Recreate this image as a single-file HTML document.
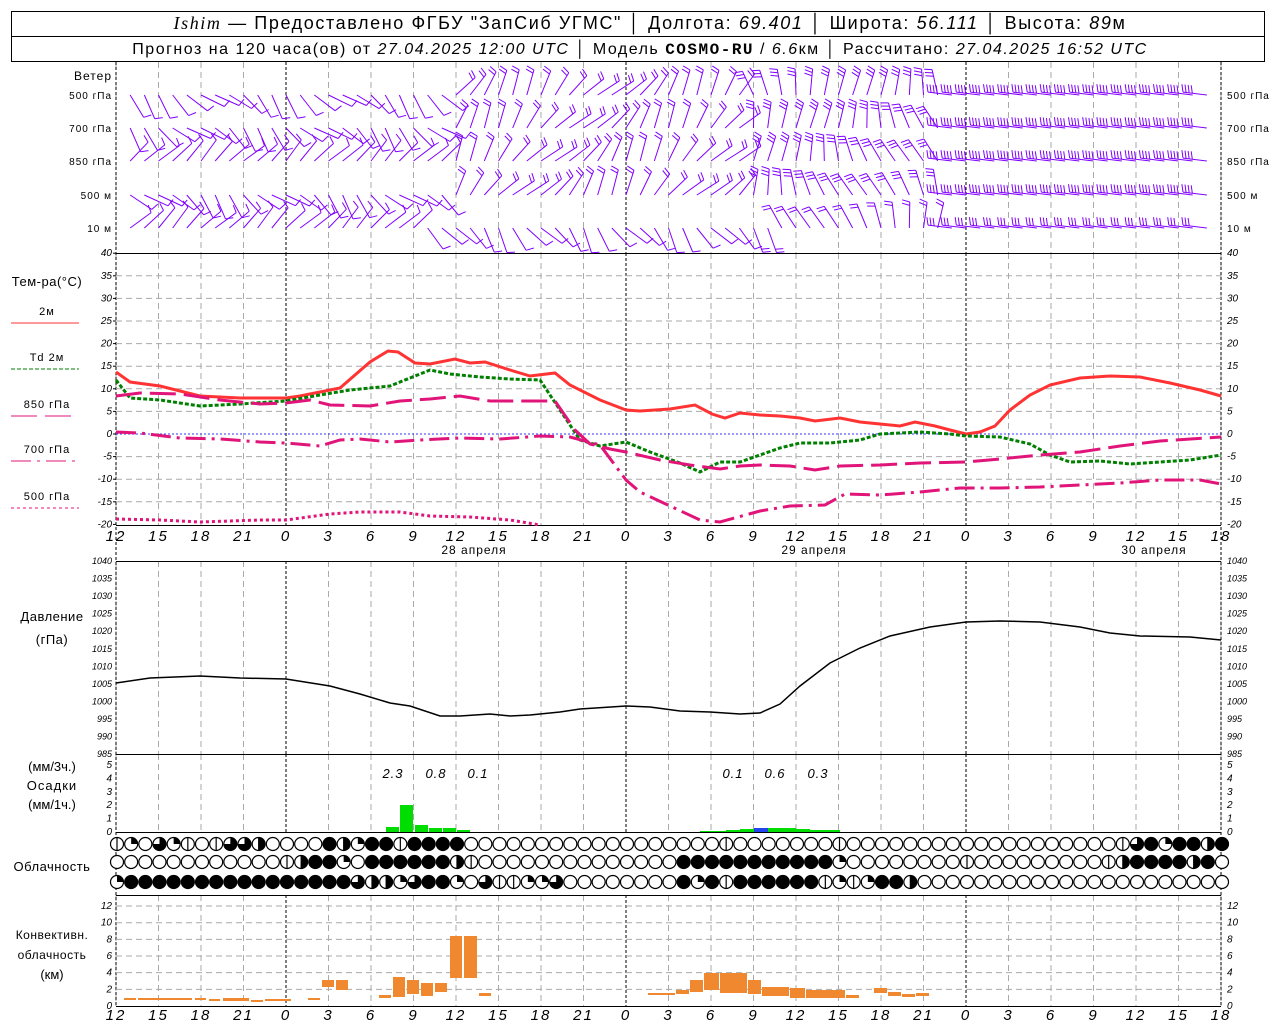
<!DOCTYPE html>
<html><head><meta charset="utf-8">
<style>
html,body{margin:0;padding:0;background:#fff;width:1280px;height:1024px;overflow:hidden}
svg{display:block}
text{font-family:"Liberation Sans","DejaVu Sans",sans-serif}
</style></head><body>
<svg id="s" width="1280" height="1024" xmlns="http://www.w3.org/2000/svg"></svg>
<script>
const S=document.getElementById('s');let h='';
const X0=116,X1=1221,PH=(X1-X0)/78;
const xh=i=>X0+i*PH;
function L(x1,y1,x2,y2,c,w,d){h+=`<line x1="${x1}" y1="${y1}" x2="${x2}" y2="${y2}" stroke="${c}" stroke-width="${w||1}"${d?` stroke-dasharray="${d}"`:''}/>`;}
function T(x,y,t,o){o=o||{};h+=`<text x="${x}" y="${y}" font-size="${o.s||12}" ${o.a?`text-anchor="${o.a}"`:''} ${o.i?'font-style="italic"':''} ${o.b?'font-weight="bold"':''} fill="${o.c||'#000'}" ${o.ls?`letter-spacing="${o.ls}"`:''}>${t}</text>`;}
function P(pts,c,w,d){h+=`<polyline fill="none" points="${pts.map(p=>p.join(',')).join(' ')}" stroke="${c}" stroke-width="${w}"${d?` stroke-dasharray="${d}"`:''}/>`;}
// header
h+=`<rect x="11.5" y="11.5" width="1253" height="50" fill="none" stroke="#000"/>`;L(11,36.5,1264,36.5,'#000');
h+=`<text x="650" y="29" font-size="18" letter-spacing="1.6" text-anchor="middle"><tspan font-style="italic" font-family="Liberation Serif">Ishim</tspan> — Предоставлено ФГБУ "ЗапСиб УГМС" │ Долгота: <tspan font-style="italic">69.401</tspan> │ Широта: <tspan font-style="italic">56.111</tspan> │ Высота: <tspan font-style="italic">89</tspan>м</text>`;
h+=`<text x="640" y="54" font-size="16" letter-spacing="1.5" text-anchor="middle">Прогноз на 120 часа(ов) от <tspan font-style="italic">27.04.2025 12:00 UTC</tspan> │ Модель <tspan font-family="Liberation Mono" font-weight="bold">COSMO-RU</tspan> / <tspan font-style="italic">6.6</tspan>км │ Рассчитано: <tspan font-style="italic">27.04.2025 16:52 UTC</tspan></text>`;
// vertical grids
const secs=[[62,253],[253,525],[561,754],[754,832],[895,1006]];
for(let i=0;i<=78;i+=3){const x=xh(i);const day=(i+12)%24==0;
 secs.forEach(([a,b])=>L(x,a,x,b,day?'#000':'#aaa',1,day?'3,2':'6,4'));}
L(X0,62,X0,1006,'#000',1,'3,2');L(X1,62,X1,1006,'#000',1,'3,2');
L(X0,253.5,X1,253.5,'#000');L(X0,754.5,X1,754.5,'#000');L(X0,561.5,X1,561.5,'#000');L(X0,895.5,X1,895.5,'#000');L(X0,832.5,X1,832.5,'#000');
for(let v=-20;v<=40;v+=5){const y=434-v*4.52;if(v>-20&&v<40)L(X0,y,X1,y,v==0?'#33f':'#aaa',1,v==0?'2,2':'6,4');
 T(112,y+3,v,{s:10,a:'end',i:1});T(1227,y+3,v,{s:10,i:1});L(X0-3,y,X0,y,'#000');}
L(X0,525.5,X1,525.5,'#000');
for(let p=985;p<=1040;p+=5){const y=561+(1040-p)*3.51;T(112,y+3,p,{s:9,a:'end',i:1});T(1227,y+3,p,{s:9,i:1});}
for(let v=0;v<=5;v++){const y=832-v*13.4;T(112,y+3,v,{s:10,a:'end',i:1});T(1227,y+3,v,{s:10,i:1});}
for(let v=0;v<=12;v+=2){const y=1006-v*8.33;if(v>0)L(X0,y,X1,y,'#aaa',1,'6,4');T(112,y+3,v,{s:10,a:'end',i:1});T(1227,y+3,v,{s:10,i:1});}
L(X0,1006.5,X1,1006.5,'#000');
for(let i=0;i<=78;i+=3){const hr=(i+12)%24;T(xh(i),541,hr,{s:15,a:'middle',i:1,ls:2});T(xh(i),1020,hr,{s:15,a:'middle',i:1,ls:2});}
T(474,554,'28 апреля',{s:12,a:'middle',ls:1});T(814,554,'29 апреля',{s:12,a:'middle',ls:1});T(1154,554,'30 апреля',{s:12,a:'middle',ls:1});
T(112,80,'Ветер',{s:12,a:'end',ls:1});
[['500 гПа',95],['700 гПа',128],['850 гПа',161],['500 м',195],['10 м',228]].forEach(([t,y])=>{T(112,y+4,t,{s:10,a:'end',ls:1});T(1227,y+4,t,{s:10,ls:1});});
T(47,286,'Тем-ра(°C)',{s:13,a:'middle',ls:0.5});
const leg=[['2м',315,'#f33','0'],['Td  2м',361,'green','4,2'],['850 гПа',408,'#e1147a','26,8'],['700 гПа',453,'#e1147a','20,6,3,6'],['500 гПа',500,'#e1147a','3,3']];
leg.forEach(([t,y,c,d])=>{T(47,y,t,{s:11,a:'middle',ls:1});L(11,y+8,79,y+8,c,1,d=='0'?null:d);});
T(52,621,'Давление',{s:13,a:'middle',ls:0.5});T(52,644,'(гПа)',{s:13,a:'middle',ls:0.5});
T(52,771,'(мм/3ч.)',{s:13,a:'middle'});T(52,790,'Осадки',{s:13,a:'middle',ls:1});T(52,809,'(мм/1ч.)',{s:13,a:'middle'});
T(52,871,'Облачность',{s:13,a:'middle',ls:0.5});
T(52,939,'Конвективн.',{s:12,a:'middle',ls:0.5});T(52,959,'облачность',{s:12,a:'middle',ls:0.5});T(52,979,'(км)',{s:13,a:'middle'});
// wind barbs
const rows=[95,128,161,195,228];
for(let r=0;r<5;r++)for(let i=1;i<78;i++){const x=xh(i),y=rows[r];
 let f=i/78, ang;
 if(f<0.3) ang=(r==2||r==4)?-Math.PI*(0.25+0.05*Math.sin(i+r)):Math.PI*(0.25+0.12*Math.sin(i*0.7+r));
 else if(f<0.57) ang=-Math.PI*(0.3+0.12*Math.sin(i*0.5+r));
 else if(f<0.75) ang=-Math.PI*(0.55+0.15*Math.cos(i*0.3+r));
 else ang=-Math.PI+0.12;
 if(r==4&&f>0.28&&f<0.6) ang=Math.PI*(0.3+0.1*Math.sin(i));
 const len=f>0.75?24:26,ex=x+Math.cos(ang)*len,ey=y+Math.sin(ang)*len;
 L(x,y,ex.toFixed(1),ey.toFixed(1),'#8000ff',1);
 let nb=f<0.3?1:(f<0.57?2:(f<0.75?3:4));if(r==4)nb=Math.max(1,nb-1);
 for(let k=0;k<nb;k++){const t=1-k*0.13,bx=x+Math.cos(ang)*len*t,by=y+Math.sin(ang)*len*t;
  const ba=ang+(f>0.75?Math.PI/2.4:-Math.PI/2.4);L(bx.toFixed(1),by.toFixed(1),(bx+Math.cos(ba)*8).toFixed(1),(by+Math.sin(ba)*8).toFixed(1),'#8000ff',1);}
}
P([[116,372],[130,382],[160,386],[200,396],[240,398],[286,398],[300,396],[340,388],[370,362],[388,351],[398,352],[415,363],[430,364],[455,359],[470,363],[485,362],[510,370],[530,376],[555,373],[570,385],[600,400],[626,410],[640,411],[670,409],[695,405],[712,414],[725,418],[740,413],[760,415],[780,416],[800,418],[815,421],[840,418],[860,422],[880,424],[900,426],[915,422],[935,426],[950,430],[966,434],[980,432],[995,426],[1010,410],[1030,395],[1050,385],[1080,378],[1110,376],[1140,377],[1170,383],[1200,390],[1221,396]],'#f33',3);
P([[116,380],[130,398],[160,400],[200,406],[240,404],[286,401],[320,395],[350,390],[390,386],[410,378],[430,370],[450,374],[480,377],[510,379],[540,380],[560,410],[580,440],[600,446],[626,442],[650,452],[680,463],[700,472],[720,462],[740,462],[760,455],[780,448],[800,443],[830,443],[860,440],[880,434],[920,432],[950,434],[966,436],[1000,437],[1030,444],[1050,455],[1070,462],[1100,461],[1130,464],[1160,462],[1190,460],[1221,455]],'green',3,'4,2');
P([[116,396],[140,393],[180,394],[220,400],[260,404],[286,403],[310,400],[330,405],[370,406],[400,401],[430,399],[460,396],[490,401],[530,401],[555,401],[575,430],[590,444],[610,449],[626,452],[660,460],[690,465],[720,469],[740,466],[760,465],[790,466],[815,470],[840,466],[880,465],[920,463],[966,462],[1000,459],[1040,455],[1080,452],[1120,446],[1160,441],[1221,437]],'#e1147a',3,'26,8');
P([[116,432],[140,433],[180,438],[220,439],[260,442],[286,443],[320,446],[340,440],[360,439],[390,442],[420,440],[460,438],[500,439],[540,436],[570,437],[600,445],[626,480],[640,492],[670,506],[700,520],[720,522],[760,511],[790,506],[825,505],[845,494],[880,495],[920,492],[960,488],[1000,488],[1040,487],[1080,485],[1120,483],[1160,480],[1200,480],[1221,484]],'#e1147a',3,'20,6,3,6');
P([[116,519],[160,520],[200,522],[260,520],[286,520],[330,514],[360,512],[400,512],[430,516],[470,517],[510,520],[540,525]],'#e1147a',3,'3,3');
P([[116,683],[150,678],[200,676],[240,678],[286,679],[330,686],[360,694],[390,703],[410,706],[440,716],[460,716],[490,714],[510,716],[530,715],[560,712],[580,709],[626,706],[650,707],[680,711],[710,712],[740,714],[760,713],[780,704],[800,686],[830,663],[860,648],[890,636],[930,627],[966,622],[1000,621],[1040,622],[1080,627],[1110,633],[1140,636],[1190,637],[1221,640]],'#000',1.5);
[[386,399,827],[400,413,805],[415,428,825],[429,442,828],[443,456,828],[457,470,830],[700,726,831],[726,740,830],[740,754,829],[768,782,828],[782,796,828],[796,810,829],[810,840,830]].forEach(([a,b,t])=>h+=`<rect x="${a}" y="${t}" width="${b-a}" height="${832-t}" fill="#00dd00"/>`);
h+=`<rect x="754" y="828" width="14" height="4" fill="#2244ee"/>`;
[['2.3',393],['0.8',436],['0.1',478],['0.1',733],['0.6',775],['0.3',818]].forEach(([t,x])=>T(x,778,t,{s:13,a:'middle',i:1,ls:1}));
const cr=["vqotqvovtthoooofhqffvffffoooooooooooooooooovooooooovooooooooooooooooooovtfqffhff",
"oooooooooooovhffqoffffffhvoooooooooooooofffffffffffqoooooooovooooooooovhffffhf",
"qffffffffffffffffthhqtffqotvvqqtoooooooofqfvffffffvqvqffhooooooooooooooooooooo"];
const cys=[844,862,882];
function circ(x,y,t){const r=6.5;h+=`<circle cx="${x}" cy="${y}" r="${r}" fill="${t=='f'?'#000':'#fff'}" stroke="#000" stroke-width="1.2"/>`;
 if(t=='v'||t=='h')L(x,y-r,x,y+r,'#000',1.2);
 if(t=='h')h+=`<path d="M${x},${y-r}A${r},${r} 0 0 1 ${x},${y+r}Z" fill="#000"/>`;
 if(t=='q')h+=`<path d="M${x},${y}L${x},${y-r}A${r},${r} 0 0 1 ${x+r},${y}Z" fill="#000"/>`;
 if(t=='t')h+=`<path d="M${x},${y}L${x},${y-r}A${r},${r} 0 1 1 ${x-r},${y}Z" fill="#000"/>`;}
cr.forEach((s,r)=>{for(let i=0;i<79;i++)circ(xh(i)+1,cys[r],s[i]||'o');});
[[124,137,998,1000],[138,193,998,1000],[195,207,998,1000],[209,221,999,1001],[223,250,998,1001],[251,264,1000,1002],[265,292,999,1001],[308,321,998,1000],[322,335,980,987],[336,349,980,990],[379,392,995,998],[393,406,977,997],[407,420,980,994],[421,434,983,996],[435,448,983,992],[450,463,936,978],[464,478,936,978],[479,492,993,996],[648,676,993,995],[676,690,990,994],[690,704,980,992],[704,720,973,990],[720,748,973,993],[748,762,980,994],[762,790,987,996],[790,806,988,998],[806,846,990,998],[846,860,995,998],[874,888,988,993],[888,902,992,996],[902,916,994,997],[916,930,993,996]].forEach(([a,b,t,u])=>h+=`<rect x="${a}" y="${t}" width="${b-a-1}" height="${Math.max(2,u-t)}" fill="#f08830"/>`);
S.innerHTML=h;
</script>
</body></html>
